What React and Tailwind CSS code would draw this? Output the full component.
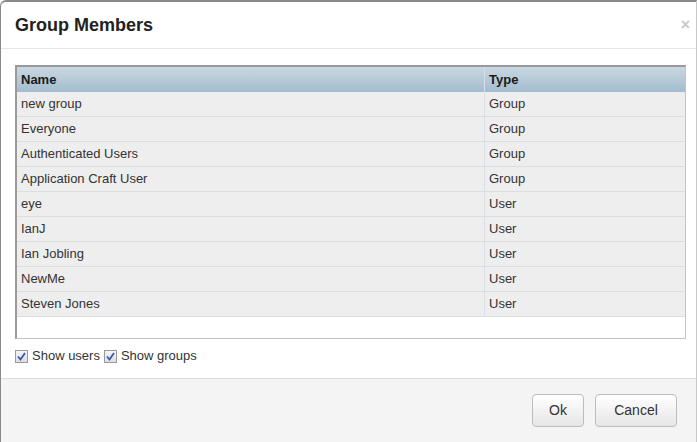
import React from 'react';

const members = [
  { name: 'new group', type: 'Group' },
  { name: 'Everyone', type: 'Group' },
  { name: 'Authenticated Users', type: 'Group' },
  { name: 'Application Craft User', type: 'Group' },
  { name: 'eye', type: 'User' },
  { name: 'IanJ', type: 'User' },
  { name: 'Ian Jobling', type: 'User' },
  { name: 'NewMe', type: 'User' },
  { name: 'Steven Jones', type: 'User' },
];

const CheckBox = () => (
  <span className="inline-flex h-[13px] w-[13px] items-center justify-center border border-[#9a9a9a] bg-gradient-to-b from-[#f4f4f4] to-[#dedede]">
    <svg width="9" height="9" viewBox="0 0 9 9">
      <path d="M1 4.5 L3.5 7.5 L8 1" fill="none" stroke="#3657b8" strokeWidth="1.8" />
    </svg>
  </span>
);

export default function App() {
  return (
    <div
      className="flex h-[442px] w-[697px] flex-col overflow-hidden rounded-tl-[6px] border-t-2 border-l border-r border-[#8a8a8a] border-r-[#c8c8c8] bg-white text-[13px] text-[#333]"
      style={{ fontFamily: '"Liberation Sans", Arial, sans-serif' }}
    >
      <div className="flex h-[47px] items-center justify-between border-b border-[#e5e5e5] pl-[14px] pr-[6px]">
        <h3 className="text-[18px] font-bold text-[#222]">Group Members</h3>
        <span className="text-[16px] font-bold leading-none text-[#c8c8c8]">×</span>
      </div>

      <div className="pl-[14px] pr-[10px] pt-[16px]">
        <div className="border-t-2 border-l-2 border-r border-b border-[#9a9a9a] border-r-[#c4c4c4] border-b-[#c4c4c4]">
          <div className="grid h-[25px] grid-cols-[468px_1fr] bg-gradient-to-b from-[#c9d7e2] via-[#b7cad8] to-[#a2bccf] font-bold text-[#1a1a1a]">
            <div className="flex items-center border-r border-[#d6e0e8] pl-[4px]">Name</div>
            <div className="flex items-center pl-[4px]">Type</div>
          </div>
          {members.map((m) => (
            <div
              key={m.name}
              className="grid h-[25px] grid-cols-[468px_1fr] border-b border-[#dadfe4] bg-[#eeeeee]"
            >
              <div className="flex items-center border-r border-[#dadfe4] pl-[4px]">{m.name}</div>
              <div className="flex items-center pl-[4px]">{m.type}</div>
            </div>
          ))}
          <div className="h-[21px] bg-white" />
        </div>

        <div className="flex h-[34px] items-center gap-[4px]">
          <label className="flex items-center gap-[4px]">
            <CheckBox />
            <span>Show users</span>
          </label>
          <label className="flex items-center gap-[4px]">
            <CheckBox />
            <span>Show groups</span>
          </label>
        </div>
      </div>

      <div className="mt-[5px] flex flex-1 items-start justify-end gap-[11px] border-t border-[#dddddd] bg-[#f4f4f4] pr-[19px] pt-[15px]">
        <button className="h-[33px] w-[52px] rounded-[4px] border border-[#bdbdbd] bg-gradient-to-b from-white to-[#e6e6e6] text-[14px] text-[#333]">
          Ok
        </button>
        <button className="h-[33px] w-[82px] rounded-[4px] border border-[#bdbdbd] bg-gradient-to-b from-white to-[#e6e6e6] text-[14px] text-[#333]">
          Cancel
        </button>
      </div>
    </div>
  );
}
